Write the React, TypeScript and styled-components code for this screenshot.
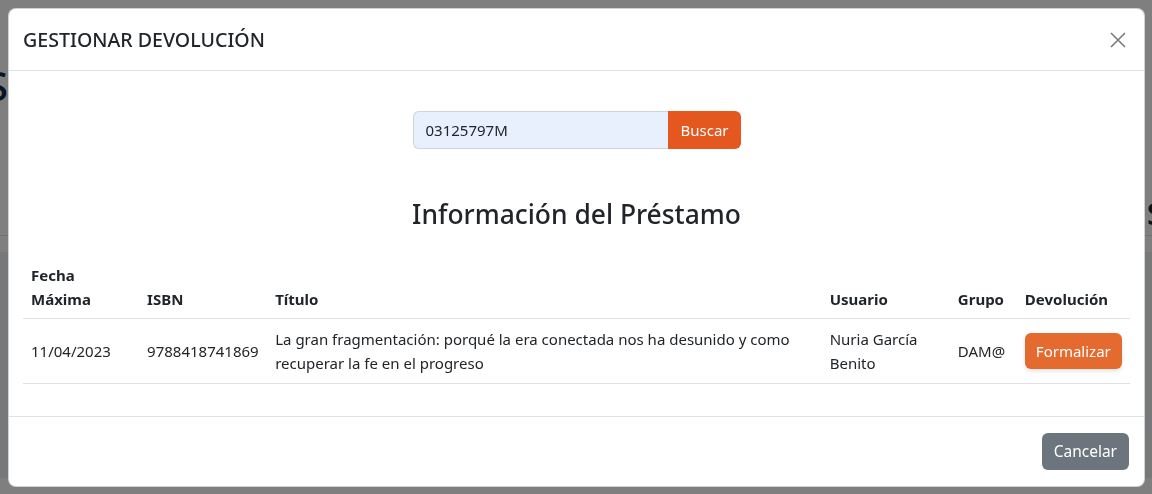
import React from 'react'
import styled, { createGlobalStyle } from 'styled-components'

const GlobalStyle = createGlobalStyle`
  html, body {
    margin: 0;
    padding: 0;
  }
  body {
    font-family: "Noto Sans", "Open Sans", Arial, sans-serif;
    font-size: 16px;
    line-height: 1.5;
    color: #212529;
    background: #fff;
  }
  * { box-sizing: border-box; }
`

const Page = styled.div`
  height: 494px;
  overflow: hidden;
`

const PageTop = styled.div`
  height: 236px;
  border-bottom: 1px solid #dee2e6;
  display: flex;
  justify-content: space-between;
  align-items: flex-start;
  padding: 62px 0 0;
`

const PageTitle = styled.h1<{ $side: 'left' | 'right' }>`
  margin: ${p => (p.$side === 'left' ? '0 0 0 -14px' : '124px -14px 0 0')};
  font-size: 40px;
  font-weight: 500;
  line-height: 1.2;
  color: #0f2a44;
`

const PageBottom = styled.div`
  height: 226px;
  margin-top: 16px;
  background: #eef0f2;
`

const Backdrop = styled.div`
  position: fixed;
  inset: 0;
  background: rgba(0, 0, 0, 0.5);
`

const Dialog = styled.div`
  position: fixed;
  top: 8px;
  left: 8px;
  width: 1137px;
  background: #fff;
  border: 1px solid rgba(0, 0, 0, 0.175);
  border-radius: 8px;
  display: flex;
  flex-direction: column;
`

const Header = styled.div`
  display: flex;
  align-items: center;
  justify-content: space-between;
  padding: 16px 16px 16px 14px;
  height: 62px;
  border-bottom: 1px solid #dee2e6;
`

const Title = styled.h5`
  margin: 0;
  font-size: 19.6px;
  font-weight: 500;
  line-height: 1.2;
`

const CloseButton = styled.button`
  width: 20px;
  height: 20px;
  padding: 0;
  border: 0;
  background: transparent;
  display: flex;
  align-items: center;
  justify-content: center;
  cursor: pointer;
`

const Body = styled.div`
  padding: 40px 14px 32px;
  display: flex;
  flex-direction: column;
  align-items: center;
`

const SearchGroup = styled.form`
  display: flex;
  width: 328px;
`

const SearchInput = styled.input`
  flex: 1;
  min-width: 0;
  height: 38px;
  padding: 6px 12px;
  font: inherit;
  font-size: 15px;
  color: #212529;
  background: #e8f0fe;
  border: 1px solid #ced4da;
  border-right: 0;
  border-radius: 6px 0 0 6px;
  outline: none;
`

const OrangeButton = styled.button<{ $tone: 'search' | 'action' }>`
  font: inherit;
  font-size: 15px;
  color: #fff;
  background: ${p => (p.$tone === 'search' ? '#e4571f' : '#e56a2f')};
  border: 0;
  border-radius: ${p => (p.$tone === 'search' ? '0 6px 6px 0' : '6px')};
  height: ${p => (p.$tone === 'search' ? '38px' : '36px')};
  padding: ${p => (p.$tone === 'search' ? '0 12px' : '0 11px')};
  box-shadow: ${p => (p.$tone === 'action' ? '0 2px 4px rgba(0,0,0,0.12)' : 'none')};
  cursor: pointer;
`

const SectionTitle = styled.h3`
  margin: 50px 0 24px;
  font-size: 26.4px;
  font-weight: 500;
  line-height: 1.2;
`

const Table = styled.table`
  width: 100%;
  border-collapse: collapse;
  table-layout: fixed;
  line-height: 24px;
`

const Th = styled.th<{ $w: number }>`
  width: ${p => p.$w}px;
  text-align: left;
  vertical-align: bottom;
  padding: 8px 8px 7px;
  font-size: 15px;
  font-weight: 700;
  border-bottom: 1px solid #dee2e6;
`

const Td = styled.td`
  vertical-align: middle;
  padding: 8px;
  font-size: 15px;
  border-bottom: 1px solid #dee2e6;
`

const Footer = styled.div`
  display: flex;
  justify-content: flex-end;
  padding: 16px 15px 16px;
  border-top: 1px solid #dee2e6;
`

const GreyButton = styled.button`
  font: inherit;
  font-size: 15.5px;
  height: 37px;
  padding: 0 12px;
  color: #fff;
  background: #6c757d;
  border: 0;
  border-radius: 6px;
  cursor: pointer;
`

const columns = [
  { label: 'Fecha Máxima', w: 116 },
  { label: 'ISBN', w: 128 },
  { label: 'Título', w: 554 },
  { label: 'Usuario', w: 128 },
  { label: 'Grupo', w: 67 },
  { label: 'Devolución', w: 113 },
]

export default function App() {
  return (
    <>
      <GlobalStyle />
      <Page>
        <PageTop>
          <PageTitle $side="left">S</PageTitle>
          <PageTitle $side="right">es</PageTitle>
        </PageTop>
        <PageBottom />
      </Page>
      <Backdrop />
      <Dialog>
        <Header>
          <Title>GESTIONAR DEVOLUCIÓN</Title>
          <CloseButton aria-label="Cerrar">
            <svg width="16" height="16" viewBox="0 0 16 16">
              <path d="M1 1L15 15M15 1L1 15" stroke="#7a7a7a" strokeWidth="1.6" />
            </svg>
          </CloseButton>
        </Header>
        <Body>
          <SearchGroup onSubmit={e => e.preventDefault()}>
            <SearchInput defaultValue="03125797M" />
            <OrangeButton $tone="search" type="submit">Buscar</OrangeButton>
          </SearchGroup>
          <SectionTitle>Información del Préstamo</SectionTitle>
          <Table>
            <thead>
              <tr>
                {columns.map(c => (
                  <Th key={c.label} $w={c.w}>{c.label}</Th>
                ))}
              </tr>
            </thead>
            <tbody>
              <tr>
                <Td>11/04/2023</Td>
                <Td>9788418741869</Td>
                <Td>La gran fragmentación: porqué la era conectada nos ha desunido y como recuperar la fe en el progreso</Td>
                <Td>Nuria García Benito</Td>
                <Td>DAM@</Td>
                <Td>
                  <OrangeButton $tone="action">Formalizar</OrangeButton>
                </Td>
              </tr>
            </tbody>
          </Table>
        </Body>
        <Footer>
          <GreyButton>Cancelar</GreyButton>
        </Footer>
      </Dialog>
    </>
  )
}
